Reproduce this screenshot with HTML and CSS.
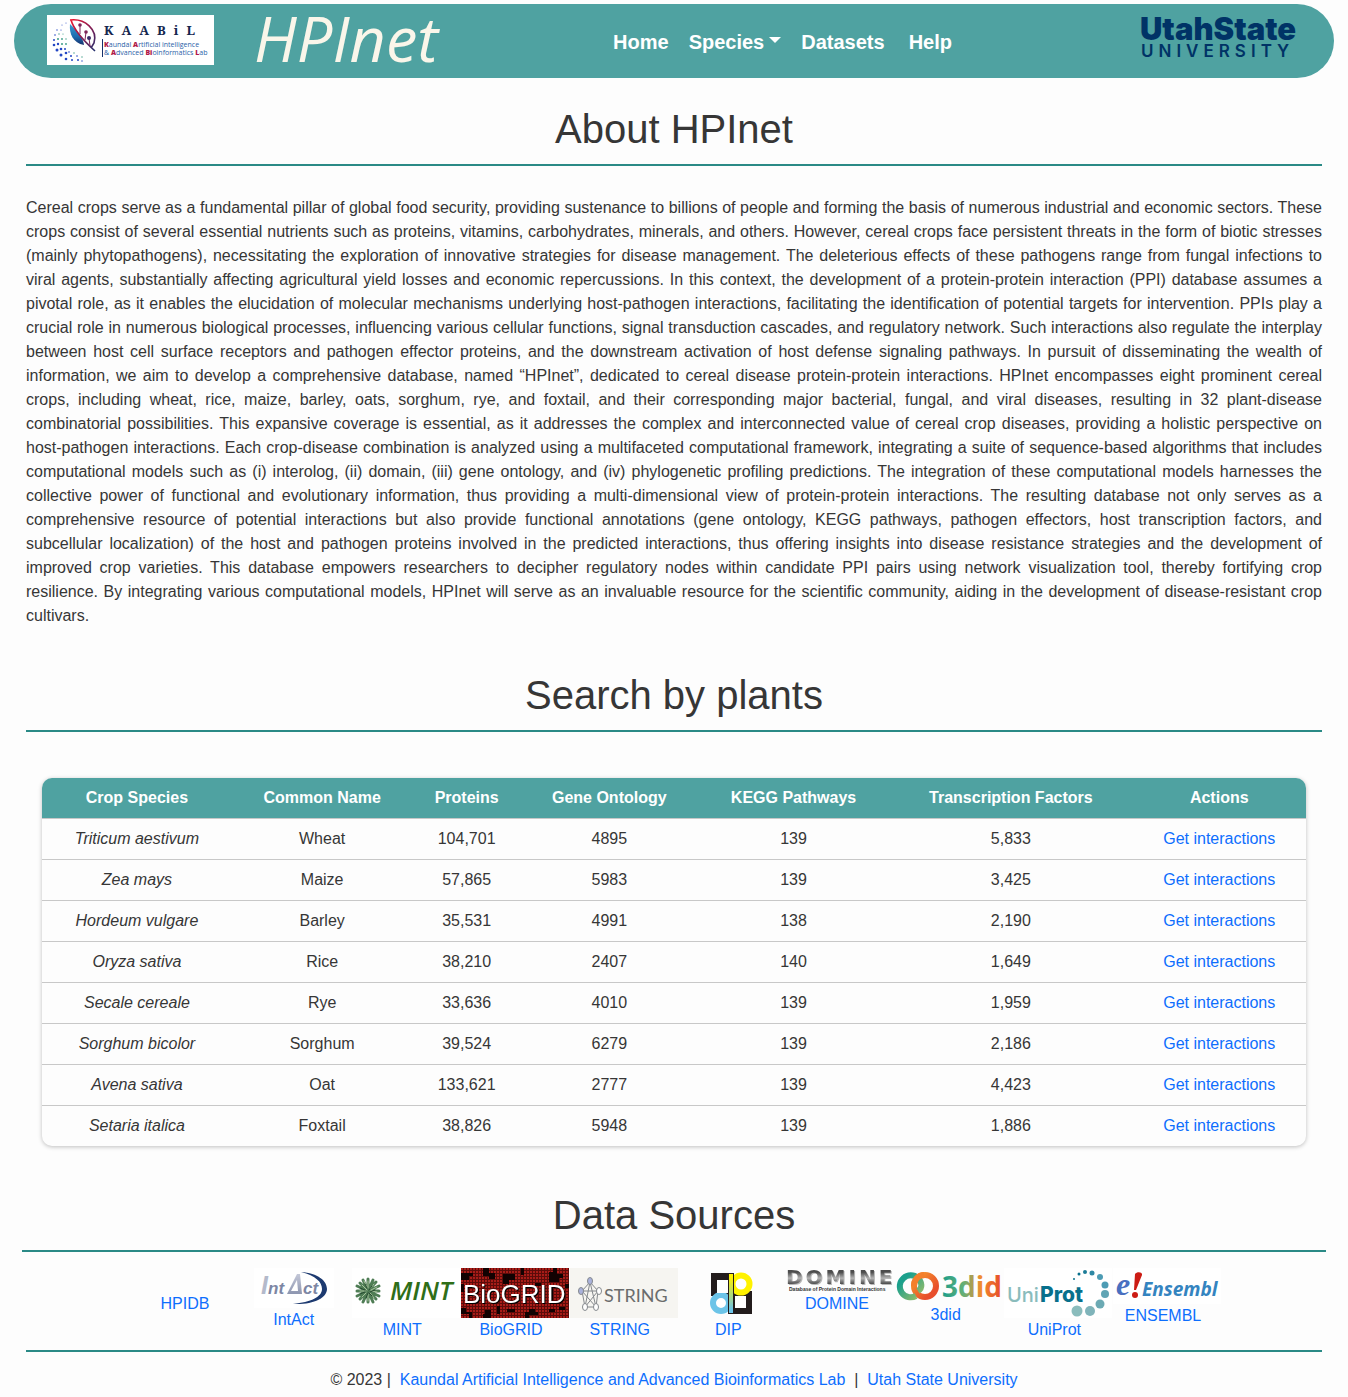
FILE: index.html
```html
<!DOCTYPE html>
<html lang="en">
<head>
<meta charset="utf-8">
<meta name="viewport" content="width=device-width, initial-scale=1">
<title>HPInet</title>
<link rel="stylesheet" href="styles.css">
</head>
<body>
<header class="navbar">
  <div class="brand">
    <a href="#kaabil" aria-label="KAABiL">
      <svg class="kaabil" width="167" height="50" viewBox="0 0 167 50">
        <defs>
          <linearGradient id="leaf" x1="0" y1="0" x2="0" y2="1"><stop offset="0" stop-color="#3a9cd0"/><stop offset="0.6" stop-color="#1d6cb0"/><stop offset="1" stop-color="#16306c"/></linearGradient>
          <linearGradient id="rim" x1="0" y1="0" x2="1" y2="1"><stop offset="0" stop-color="#f0142c"/><stop offset="0.5" stop-color="#8c1a50"/><stop offset="1" stop-color="#22306e"/></linearGradient>
        </defs>
        <rect width="167" height="50" fill="#fff"/>
        <path d="M23 9C22 19 26 28 37 30C36 22 30 16 23 9Z" fill="url(#leaf)"/>
        <path d="M24 5C27 15 38 27 48 36M23 5C38 3 51 15 47 28L44 33" fill="none" stroke="url(#rim)" stroke-width="1.6"/>
        <path d="M33 19V11M38 25L39 17M43 31L42 23" fill="none" stroke="#7c2458" stroke-width="1"/>
        <g fill="#7c2458"><circle cx="33" cy="10" r="1.8"/><circle cx="39" cy="17" r="1.8"/><circle cx="42" cy="23" r="2" fill="#392a68"/></g>
        <g fill="#2346c4">
          <circle cx="7" cy="30" r="1.3"/><circle cx="7" cy="25" r="1"/><circle cx="8" cy="20" r="0.8"/><circle cx="10" cy="35" r="1.5"/><circle cx="14" cy="40" r="1.5"/><circle cx="19" cy="44" r="1.3"/><circle cx="25" cy="45" r="1"/><circle cx="31" cy="45" r="1"/><circle cx="35" cy="46" r="0.7"/><circle cx="11" cy="29" r="1.2"/><circle cx="14" cy="34" r="1.3"/><circle cx="19" cy="38" r="1.3"/><circle cx="24" cy="41" r="1"/><circle cx="30" cy="41" r="0.8"/><circle cx="10" cy="15" r="0.7"/><circle cx="14" cy="15" r="0.6"/><circle cx="15" cy="10" r="0.5"/><circle cx="19" cy="8" r="0.5"/><circle cx="18" cy="34" r="1"/><circle cx="22" cy="37" r="0.8"/>
        </g>
        <g fill="#3b9c86"><circle cx="11" cy="24" r="1"/><circle cx="15" cy="24" r="0.9"/><circle cx="19" cy="24" r="0.7"/><circle cx="15" cy="29" r="1"/><circle cx="19" cy="29" r="0.9"/><circle cx="12" cy="19" r="0.7"/><circle cx="16" cy="19" r="0.6"/><circle cx="27" cy="38" r="0.7"/><circle cx="35" cy="42" r="0.7"/></g>
        <text class="kaabil-name" x="57" y="20">KAABiL</text>
        <path d="M55.500 24V42" stroke="#16306c"/>
        <text class="kaabil-sub" x="57" y="32"><tspan>K</tspan>aundal <tspan>A</tspan>rtificial intelligence</text>
        <text class="kaabil-sub" x="57" y="40">&amp; <tspan>A</tspan>dvanced <tspan>Bi</tspan>oinformatics <tspan>L</tspan>ab</text>
      </svg>
    </a>
    <a class="site-name" href="#home">HPInet</a>
  </div>
  <nav class="menu">
    <a href="#home">Home</a>
    <button type="button" class="species">Species<span class="caret"></span></button>
    <a href="#datasets">Datasets</a>
    <a class="help" href="#help">Help</a>
  </nav>
  <a href="#usu" aria-label="Utah State University">
    <svg class="usu" width="160" height="50" viewBox="0 0 160 50">
      <text class="usu-top" x="-1" y="25">UtahState</text>
      <text class="usu-bottom" x="0" y="42">UNIVERSITY</text>
    </svg>
  </a>
</header>

<main>
  <section class="about">
    <h1>About HPInet</h1>
    <p>Cereal crops serve as a fundamental pillar of global food security, providing sustenance to billions of people and forming the basis of numerous industrial and economic sectors. These crops consist of several essential nutrients such as proteins, vitamins, carbohydrates, minerals, and others. However, cereal crops face persistent threats in the form of biotic stresses (mainly phytopathogens), necessitating the exploration of innovative strategies for disease management. The deleterious effects of these pathogens range from fungal infections to viral agents, substantially affecting agricultural yield losses and economic repercussions. In this context, the development of a protein-protein interaction (PPI) database assumes a pivotal role, as it enables the elucidation of molecular mechanisms underlying host-pathogen interactions, facilitating the identification of potential targets for intervention. PPIs play a crucial role in numerous biological processes, influencing various cellular functions, signal transduction cascades, and regulatory network. Such interactions also regulate the interplay between host cell surface receptors and pathogen effector proteins, and the downstream activation of host defense signaling pathways. In pursuit of disseminating the wealth of information, we aim to develop a comprehensive database, named “HPInet”, dedicated to cereal disease protein-protein interactions. HPInet encompasses eight prominent cereal crops, including wheat, rice, maize, barley, oats, sorghum, rye, and foxtail, and their corresponding major bacterial, fungal, and viral diseases, resulting in 32 plant-disease combinatorial possibilities. This expansive coverage is essential, as it addresses the complex and interconnected value of cereal crop diseases, providing a holistic perspective on host-pathogen interactions. Each crop-disease combination is analyzed using a multifaceted computational framework, integrating a suite of sequence-based algorithms that includes computational models such as (i) interolog, (ii) domain, (iii) gene ontology, and (iv) phylogenetic profiling predictions. The integration of these computational models harnesses the collective power of functional and evolutionary information, thus providing a multi-dimensional view of protein-protein interactions. The resulting database not only serves as a comprehensive resource of potential interactions but also provide functional annotations (gene ontology, KEGG pathways, pathogen effectors, host transcription factors, and subcellular localization) of the host and pathogen proteins involved in the predicted interactions, thus offering insights into disease resistance strategies and the development of improved crop varieties. This database empowers researchers to decipher regulatory nodes within candidate PPI pairs using network visualization tool, thereby fortifying crop resilience. By integrating various computational models, HPInet will serve as an invaluable resource for the scientific community, aiding in the development of disease-resistant crop cultivars.</p>
  </section>

  <section class="plants">
    <h1>Search by plants</h1>
    <div class="table-card">
      <table>
        <thead>
          <tr><th>Crop Species</th><th>Common Name</th><th>Proteins</th><th>Gene Ontology</th><th>KEGG Pathways</th><th>Transcription Factors</th><th>Actions</th></tr>
        </thead>
        <tbody>
          <tr><td><i>Triticum aestivum</i></td><td>Wheat</td><td>104,701</td><td>4895</td><td>139</td><td>5,833</td><td><a href="#wheat">Get interactions</a></td></tr>
          <tr><td><i>Zea mays</i></td><td>Maize</td><td>57,865</td><td>5983</td><td>139</td><td>3,425</td><td><a href="#maize">Get interactions</a></td></tr>
          <tr><td><i>Hordeum vulgare</i></td><td>Barley</td><td>35,531</td><td>4991</td><td>138</td><td>2,190</td><td><a href="#barley">Get interactions</a></td></tr>
          <tr><td><i>Oryza sativa</i></td><td>Rice</td><td>38,210</td><td>2407</td><td>140</td><td>1,649</td><td><a href="#rice">Get interactions</a></td></tr>
          <tr><td><i>Secale cereale</i></td><td>Rye</td><td>33,636</td><td>4010</td><td>139</td><td>1,959</td><td><a href="#rye">Get interactions</a></td></tr>
          <tr><td><i>Sorghum bicolor</i></td><td>Sorghum</td><td>39,524</td><td>6279</td><td>139</td><td>2,186</td><td><a href="#sorghum">Get interactions</a></td></tr>
          <tr><td><i>Avena sativa</i></td><td>Oat</td><td>133,621</td><td>2777</td><td>139</td><td>4,423</td><td><a href="#oat">Get interactions</a></td></tr>
          <tr><td><i>Setaria italica</i></td><td>Foxtail</td><td>38,826</td><td>5948</td><td>139</td><td>1,886</td><td><a href="#foxtail">Get interactions</a></td></tr>
        </tbody>
      </table>
    </div>
  </section>

  <section class="sources">
    <h1>Data Sources</h1>
    <div class="source-row">
      <a class="text-only" href="#hpidb">HPIDB</a>
      <a href="#intact">
        <svg width="80" height="40" viewBox="0 0 80 40">
          <defs><linearGradient id="ia" x1="0" y1="0" x2="0" y2="1"><stop offset="0" stop-color="#c4c8d8"/><stop offset="1" stop-color="#8d96b0"/></linearGradient></defs>
          <rect width="80" height="40" fill="#fff"/>
          <path d="M47 4C64 5 73 13 73 21C73 30 59 37 39 36C57 34 68 29 68 21C68 14 62 8 47 4Z" fill="#1d3a70"/>
          <text class="intact-big" x="7" y="26">I</text>
          <text class="intact-small" x="14" y="26">nt</text>
          <path d="M33 26L43 6H46L48 26ZM37 23H44L43 12Z" fill="url(#ia)" fill-rule="evenodd"/>
          <text class="intact-small" x="49" y="26">ct</text>
        </svg>
        <span>IntAct</span>
      </a>
      <a class="wide" href="#mint">
        <svg width="108" height="50" viewBox="0 0 108 50">
          <rect width="108" height="50" fill="#fff"/>
          <g stroke="#4f7d55" stroke-width="3" stroke-linecap="round">
            <path d="M16 11V34M5 23H27M8 15L24 31M24 14L8 31M11 12L21 34M21 12L11 34M5 18L27 28M27 18L5 28"/>
          </g>
          <g stroke="#a8c49c" stroke-linecap="round"><path d="M16 13V20M8 23H14M10 17L15 22M22 16L18 21M25 24L19 23M22 30L18 25M16 33V26M10 29L14 25M12 13L15 19M25 19L19 22"/></g>
          <g stroke="#25492f" stroke-linecap="round"><path d="M13 16L15 20M20 18L17 22M23 22L18 24M20 28L17 25M14 30L16 25M8 26L13 24M8 20L13 22"/></g>
          <text class="mint" x="38" y="32">MINT</text>
        </svg>
        <span>MINT</span>
      </a>
      <a class="wide" href="#biogrid">
        <svg width="108" height="50" viewBox="0 0 108 50">
          <defs>
            <pattern id="mesh" width="3" height="3" patternUnits="userSpaceOnUse"><rect width="3" height="3" fill="#a81c18"/><path d="M0 2.500H3M2.500 0V3" stroke="#5c0c0a"/></pattern>
          </defs>
          <rect width="108" height="50" fill="url(#mesh)"/>
          <path d="M0 5H12V8H8V12H0ZM22 0H28V5H34V11H28V8H22ZM42 6H54V12H48V16H42ZM60 0H63V7H60ZM88 4H92V0H96V6H102V10H98V14H88ZM74 15H80V18H74ZM0 40H5V44H11V50H8V46H0ZM24 42H30V50H22V46H24ZM46 41H54V44H46ZM64 44H68V41H74V44H77V47H68V50H64ZM88 41H94V44H88ZM98 39H104V42H98ZM36 38H39V46H36ZM88 20H92V32H88ZM0 16H3V24H0ZM104 16H108V20H104Z" fill="#120202"/>
          <text class="biogrid" x="2" y="35">BioGRID</text>
        </svg>
        <span>BioGRID</span>
      </a>
      <a class="wide" href="#string">
        <svg width="108" height="50" viewBox="0 0 108 50">
          <rect width="108" height="50" fill="#f6f5f1"/>
          <g stroke="#84888c" fill="none"><path d="M20 14L12 23L15 39L26 39L28 23ZM20 14L15 39M20 14L26 39M12 23H28M12 23L26 39M28 23L15 39"/></g>
          <g stroke="#84888c" fill="#fff"><ellipse cx="20" cy="13" rx="2.500" ry="3.500" fill="#aab2dc"/><ellipse cx="11" cy="23" rx="2.500" ry="3.500" fill="#aab2dc"/><ellipse cx="29" cy="23" rx="2.500" ry="3.500"/><ellipse cx="15" cy="39" rx="2.500" ry="3.500"/><ellipse cx="26" cy="39" rx="2.500" ry="3.500"/></g>
          <text class="string" x="34" y="34">STRING</text>
        </svg>
        <span>STRING</span>
      </a>
      <a href="#dip">
        <svg width="108" height="50" viewBox="0 0 108 50">
          <defs><linearGradient id="bar" x1="0" y1="0" x2="0" y2="1"><stop offset="0.1" stop-color="#fff200"/><stop offset="0.9" stop-color="#6cc4e8"/></linearGradient></defs>
          <path d="M37 5H58V28H37ZM57 23H78V46H57Z" fill="#231c1c"/>
          <circle cx="67" cy="16" r="8.500" fill="#fff" stroke="#fff200" stroke-width="6"/>
          <circle cx="47" cy="35" r="8" fill="#fff" stroke="#6cc4e8" stroke-width="6"/>
          <rect x="43" y="12" width="11" height="13" fill="#fff"/>
          <rect x="61" y="28" width="11" height="12" fill="#fff"/>
          <rect x="54.500" y="5.500" width="5" height="40" fill="url(#bar)" stroke="#231c1c"/>
        </svg>
        <span>DIP</span>
      </a>
      <a class="wide" href="#domine">
        <svg width="112" height="24" viewBox="0 0 112 24">
          <defs><linearGradient id="metal" x1="0" y1="0" x2="0" y2="1"><stop offset="0.3" stop-color="#4c4c4c"/><stop offset="0.55" stop-color="#b4b4b4"/><stop offset="0.8" stop-color="#484848"/></linearGradient></defs>
          <text class="domine" x="1" y="16" fill="url(#metal)">DOMINE</text>
          <text class="domine-sub" x="4" y="23">Database of Protein Domain Interactions</text>
        </svg>
        <span>DOMINE</span>
      </a>
      <a class="wide" href="#3did">
        <svg width="108" height="35" viewBox="0 0 108 35">
          <defs>
            <linearGradient id="ringa" x1="0" y1="0" x2="1" y2="1"><stop offset="0.2" stop-color="#1ba08c"/><stop offset="1" stop-color="#9abd68"/></linearGradient>
            <linearGradient id="ringb" x1="0" y1="0" x2="1" y2="1"><stop offset="0" stop-color="#f79a2a"/><stop offset="0.8" stop-color="#e84e2c"/></linearGradient>
            <linearGradient id="word" x1="0" y1="0" x2="1" y2="0"><stop offset="0" stop-color="#1b9d8b"/><stop offset="0.35" stop-color="#62b078"/><stop offset="0.65" stop-color="#f28c2c"/><stop offset="1" stop-color="#e64a2c"/></linearGradient>
          </defs>
          <circle cx="29" cy="18" r="11" fill="none" stroke="url(#ringb)" stroke-width="6"/>
          <path d="M20 28A11 11 0 1 1 22 10C26 14 27 20 22 23" fill="none" stroke="url(#ringa)" stroke-width="6"/>
          <path d="M18 18C18 12 22 7 28 7" fill="none" stroke="#f47f2b" stroke-width="6"/>
          <text class="threedid" x="46" y="29" fill="url(#word)">3did</text>
        </svg>
        <span>3did</span>
      </a>
      <a class="wide" href="#uniprot">
        <svg width="108" height="50" viewBox="0 0 108 50">
          <rect width="108" height="50" fill="#fff"/>
          <text class="uni" x="3" y="34">Uni</text>
          <text class="prot" x="36" y="34">Prot</text>
          <g fill="#4d9cb4"><circle cx="70" cy="11" r="1" fill="#08708c"/><circle cx="75" cy="6" r="1.500" fill="#08708c"/><circle cx="81" cy="4" r="2" fill="#1c7c98"/><circle cx="88" cy="5" r="2.500" fill="#2e88a4"/><circle cx="96" cy="9" r="3"/><circle cx="101" cy="17" r="3.500"/><circle cx="101" cy="26" r="4" fill="#60a4b4"/><circle cx="96" cy="36" r="4.500" fill="#6caab4"/><circle cx="86" cy="43" r="5" fill="#80b4ba"/><circle cx="73" cy="43" r="5.500" fill="#8abcbc"/></g>
        </svg>
        <span>UniProt</span>
      </a>
      <a class="wide" href="#ensembl">
        <svg width="108" height="36" viewBox="0 0 108 36">
          <rect width="108" height="36" fill="#fff"/>
          <text class="ens-e" x="3" y="27">e</text>
          <path d="M22 6C24 3 30 4 29 7L23 22L21 22Z" fill="#cc1c14"/><circle cx="22" cy="27" r="3" fill="#cc1c14"/>
          <text class="ens" x="29" y="28">Ensembl</text>
        </svg>
        <span>ENSEMBL</span>
      </a>
    </div>
  </section>
</main>

<footer>
  © 2023 |&nbsp; <a href="#lab">Kaundal Artificial Intelligence and Advanced Bioinformatics Lab</a> &nbsp;|&nbsp; <a href="#usu">Utah State University</a>
</footer>
</body>
</html>
```
FILE: styles.css
```css
* { box-sizing: border-box; }

body {
  margin: 0;
  background: #fdfdfd;
  color: #363636;
  font: 16px/24px "Liberation Sans", Arial, sans-serif;
}

a { color: #0d6efd; text-decoration: none; }
svg { display: block; flex: none; overflow: visible; }

/* Top bar */
.navbar {
  display: flex;
  align-items: center;
  justify-content: space-between;
  margin: 4px 14px 0;
  padding: 11px 33px 13px;
  border-radius: 37px;
  background: #4fa2a1;
}
.brand { display: flex; align-items: center; gap: 40px; }
.site-name {
  padding-bottom: 4px;
  color: #faf6ea;
  font: italic 63px/46px "Open Sans", "Noto Sans", sans-serif;
}
.menu { display: flex; align-items: center; gap: 20px; padding: 4px 14px 0 0; }
.menu a, .species {
  padding: 0;
  border: 0;
  background: none;
  color: #fff;
  font: bold 20px/30px "Liberation Sans", Arial, sans-serif;
}
.menu .help { margin-left: 4px; }
.species { display: flex; align-items: center; gap: 5px; }
.caret {
  margin-bottom: 4px;
  border: 6px solid transparent;
  border-top-color: #fff;
  border-bottom: 0;
}
.kaabil-name { font: bold 13px "Noto Serif", "Liberation Serif", serif; letter-spacing: 8px; fill: #14264e; }
.kaabil-sub { font: 7px "Open Sans", sans-serif; fill: #2a62a8; }
.kaabil-sub tspan { font-weight: 800; fill: #b01848; }
.usu-top { font: 900 31px Inter, sans-serif; fill: #003366; }
.usu-bottom { font: 600 17px Inter, sans-serif; letter-spacing: 5px; fill: #003366; }

/* Sections */
h1 {
  margin: 0;
  padding-bottom: 11px;
  border-bottom: 2px solid #2a8a86;
  font-size: 40px;
  line-height: 48px;
  font-weight: 400;
  text-align: center;
}
.about, .plants { margin: 0 26px; }
.about { padding-top: 27px; }
.about p { margin: 30px 0 0; text-align: justify; }
.plants { padding-top: 43px; }

.table-card {
  margin: 46px 16px 0;
  border-radius: 10px;
  overflow: hidden;
  box-shadow: 0 1px 4px rgba(0, 0, 0, 0.25);
}
table { width: 100%; border-collapse: separate; border-spacing: 0; text-align: center; }
th, td { padding: 8px; }
th { background: #4fa2a1; color: #fff; }
td { border-top: 1px solid #c8c8c8; }

/* Logos of the source databases */
.sources { margin: 0 22px; padding-top: 45px; }
.source-row {
  display: grid;
  grid-template-columns: repeat(10, minmax(0, 1fr));
  width: 83.3333%;
  margin: 16px auto 0;
}
.source-row a { display: flex; flex-direction: column; align-items: center; }
.source-row .text-only { padding-top: 24px; }
.wide svg { margin-left: 8px; }

.intact-big { font: italic bold 25px "Liberation Sans", sans-serif; fill: #b4bacb; }
.intact-small { font: italic bold 17px "Liberation Sans", sans-serif; fill: #7c86a4; }
.mint { font: italic 600 26px "Open Sans", sans-serif; fill: #2f6e18; }
.biogrid { font: 26px "Liberation Sans", sans-serif; fill: #fff; filter: drop-shadow(1px 1px 0 #000); }
.string { font: 18px Lato, sans-serif; fill: #6a6c6c; }
.domine { font: bold 20px "DejaVu Sans", sans-serif; letter-spacing: 3px; filter: drop-shadow(1px 1px 0 #b8b8b8); }
.domine-sub { font: bold 5px "Liberation Sans", sans-serif; fill: #333; }
.threedid { font: bold 28px "Open Sans", sans-serif; }
.uni { font: 500 20px Inter, sans-serif; fill: #8abcbc; }
.prot { font: 800 21px Inter, sans-serif; fill: #08708c; }
.ens-e { font: italic bold 32px "Liberation Serif", serif; fill: #4a70c0; }
.ens { font: italic bold 19px "Open Sans", sans-serif; fill: #3484c0; }

footer {
  margin: 8px 26px 0;
  padding: 16px 0 5px;
  border-top: 2px solid #2a8a86;
  text-align: center;
}
```
